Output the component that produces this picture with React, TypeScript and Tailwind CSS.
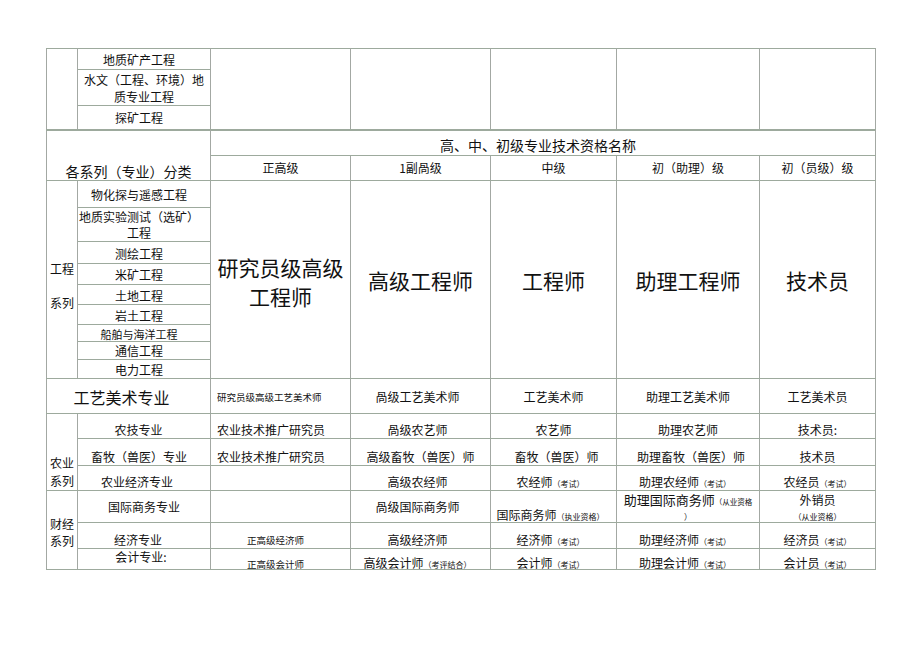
const B = "border border-solid border-y-[#9daa9d] border-x-[#a3a8a3] p-0";
const C = `${B} text-center`;

function Cols() {
  return (
    <colgroup>
      <col className="w-[31px]" />
      <col className="w-[133px]" />
      <col className="w-[140px]" />
      <col className="w-[140px]" />
      <col className="w-[126px]" />
      <col className="w-[143px]" />
      <col className="w-[116px]" />
    </colgroup>
  );
}

const S = ({ children }: { children: React.ReactNode }) => (
  <span className="text-[8px] leading-none">{children}</span>
);

export default function App() {
  const t12 = "text-[12px] leading-[16px]";
  const mid = `${C} align-middle`;
  const eng2 = `${mid} ${t12} pr-[10px] pt-[2px]`;
  const big = `${mid} text-[21px] leading-[29px]`;
  const agri = `${C} align-bottom ${t12}`;
  const fin2 = `${C} align-bottom text-[12px] leading-[14px] pb-[1px]`;
  const fin3 = `${C} align-bottom text-[12px] leading-[12px]`;
  return (
    <div className="min-h-[650px] w-[920px] bg-white pl-[46px] pt-[48px] text-[#111] [font-family:'Noto_Sans_CJK_SC','Noto_Sans',sans-serif]">
      <table className="w-[829px] table-fixed border-collapse">
        <Cols />
        <tbody>
          <tr className="h-[21px]">
            <td rowSpan={3} className={B}></td>
            <td className={`${mid} ${t12} pr-[10px] pt-[2px]`}>地质矿产工程</td>
            <td rowSpan={3} className={B}></td>
            <td rowSpan={3} className={B}></td>
            <td rowSpan={3} className={B}></td>
            <td rowSpan={3} className={B}></td>
            <td rowSpan={3} className={B}></td>
          </tr>
          <tr className="h-[36px]">
            <td className={`${mid} text-[12px] leading-[17px] pt-[1px]`}>
              水文（工程、环境）地
              <br />
              质专业工程
            </td>
          </tr>
          <tr className="h-[24px]">
            <td className={`${mid} ${t12} pr-[10px]`}>探矿工程</td>
          </tr>
        </tbody>
      </table>
      <table className="w-[829px] table-fixed border-collapse">
        <Cols />
        <tbody>
          <tr className="h-[25px]">
            <td rowSpan={2} colSpan={2} className={`${C} align-bottom text-[14px] leading-[18px]`}>
              各系列（专业）分类
            </td>
            <td colSpan={5} className={`${mid} text-[14px] leading-[18px] pt-[3px] pr-[10px]`}>
              高、中、初级专业技术资格名称
            </td>
          </tr>
          <tr className="h-[25px]">
            <td className={`${mid} ${t12}`}>正高级</td>
            <td className={`${mid} ${t12}`}>1副咼级</td>
            <td className={`${mid} ${t12}`}>中级</td>
            <td className={`${mid} ${t12}`}>初（助理）级</td>
            <td className={`${mid} ${t12}`}>初（员级）级</td>
          </tr>

          {/* 工程系列 */}
          <tr className="h-[27px]">
            <td rowSpan={9} className={`${B} align-middle text-left pl-[3px] pt-[11px] text-[12px] leading-[17px]`}>
              工程
              <br />
              <br />
              系列
            </td>
            <td className={eng2}>物化探与遥感工程</td>
            <td rowSpan={9} className={`${big} pt-[5px]`}>
              研究员级高级
              <br />
              工程师
            </td>
            <td rowSpan={9} className={`${big} pt-[2px]`}>高级工程师</td>
            <td rowSpan={9} className={`${big} pt-[2px]`}>工程师</td>
            <td rowSpan={9} className={`${big} pt-[2px]`}>助理工程师</td>
            <td rowSpan={9} className={`${big} pt-[2px]`}>技术员</td>
          </tr>
          <tr className="h-[34px]">
            <td className={`${mid} ${t12} pr-[10px]`}>
              地质实验测试（选矿）
              <br />
              工程
            </td>
          </tr>
          <tr className="h-[22px]">
            <td className={eng2}>测绘工程</td>
          </tr>
          <tr className="h-[21px]">
            <td className={eng2}>米矿工程</td>
          </tr>
          <tr className="h-[20px]">
            <td className={eng2}>土地工程</td>
          </tr>
          <tr className="h-[20px]">
            <td className={eng2}>岩土工程</td>
          </tr>
          <tr className="h-[17px]">
            <td className={`${mid} text-[11px] leading-[14px] pr-[10px] pt-[1px]`}>船舶与海洋工程</td>
          </tr>
          <tr className="h-[18px]">
            <td className={`${mid} ${t12} pr-[10px] pt-[1px]`}>通信工程</td>
          </tr>
          <tr className="h-[19px]">
            <td className={`${mid} ${t12} pr-[10px] pt-[1px]`}>电力工程</td>
          </tr>

          {/* 工艺美术 */}
          <tr className="h-[35px]">
            <td colSpan={2} className={`${mid} text-[16px] leading-[20px] pr-[14px] pt-[1px]`}>
              工艺美术专业
            </td>
            <td className={`${B} align-middle text-left pl-[6px] text-[9.5px] leading-[12px] pt-[2px]`}>
              研究员级高级工艺美术师
            </td>
            <td className={`${mid} ${t12} pr-[6px] pt-[1px]`}>咼级工艺美术师</td>
            <td className={`${mid} ${t12} pt-[1px]`}>工艺美术师</td>
            <td className={`${mid} ${t12} pt-[1px]`}>助理工艺美术师</td>
            <td className={`${mid} ${t12} pt-[1px]`}>工艺美术员</td>
          </tr>

          {/* 农业系列 */}
          <tr className="h-[25px]">
            <td rowSpan={3} className={`${B} align-bottom text-left pl-[3px] text-[12px] leading-[18px]`}>
              农业
              <br />
              系列
            </td>
            <td className={`${agri} pr-[11px]`}>农技专业</td>
            <td className={`${B} align-bottom text-left pl-[6px] ${t12}`}>农业技术推广研究员</td>
            <td className={`${agri} pr-[6px]`}>咼级农艺师</td>
            <td className={agri}>农艺师</td>
            <td className={agri}>助理农艺师</td>
            <td className={agri}>技术员:</td>
          </tr>
          <tr className="h-[27px]">
            <td className={`${agri} pr-[10px]`}>畜牧（兽医）专业</td>
            <td className={`${B} align-bottom text-left pl-[6px] ${t12}`}>农业技术推广研究员</td>
            <td className={agri}>高级畜牧（兽医）师</td>
            <td className={`${agri} pl-[6px]`}>畜牧（兽医）师</td>
            <td className={`${agri} pl-[6px]`}>助理畜牧（兽医）师</td>
            <td className={agri}>技术员</td>
          </tr>
          <tr className="h-[25px]">
            <td className={`${agri} pr-[14px]`}>农业经济专业</td>
            <td className={B}></td>
            <td className={`${agri} pr-[6px]`}>高级农经师</td>
            <td className={`${agri} pr-[6px]`}>
              农经师<S>（考试）</S>
            </td>
            <td className={`${agri} pr-[6px]`}>
              助理农经师<S>（考试）</S>
            </td>
            <td className={agri}>
              农经员<S>（考试）</S>
            </td>
          </tr>

          {/* 财经系列 */}
          <tr className="h-[32px]">
            <td rowSpan={3} className={`${B} align-middle text-left pl-[3px] pt-[4px] text-[12px] leading-[17px]`}>
              财经
              <br />
              系列
            </td>
            <td className={`${mid} ${t12}`}>国际商务专业</td>
            <td className={B}></td>
            <td className={`${mid} ${t12} pr-[6px]`}>咼级国际商务师</td>
            <td className={`${C} align-bottom text-[12px] leading-[14px] whitespace-nowrap pr-[6px]`}>
              国际商务师<S>（执业资格）</S>
            </td>
            <td className={`${mid} text-[13px] leading-[15px]`}>
              助理国际商务师<span className="text-[7.5px] leading-none">（从业资格</span>
              <br />
              <span className="text-[8px] leading-none">）</span>
            </td>
            <td className={`${mid} text-[12px] leading-[15px]`}>
              外销员
              <br />
              <S>（从业资格）</S>
            </td>
          </tr>
          <tr className="h-[26px]">
            <td className={`${fin2} pr-[12px]`}>经济专业</td>
            <td className={`${B} align-bottom text-left pl-[36px] text-[9.5px] leading-[12px] pb-[2px]`}>
              正高级经济师
            </td>
            <td className={`${fin2} pr-[6px]`}>高级经济师</td>
            <td className={`${fin2} pr-[6px]`}>
              经济师<S>（考试）</S>
            </td>
            <td className={`${fin2} pr-[6px]`}>
              助理经济师<S>（考试）</S>
            </td>
            <td className={fin2}>
              经济员<S>（考试）</S>
            </td>
          </tr>
          <tr className="h-[21px]">
            <td className={`${C} align-top text-[12px] leading-[16px] pr-[6px]`}>会计专业:</td>
            <td className={`${B} align-bottom text-left pl-[36px] text-[9.5px] leading-[10px]`}>
              正高级会计师
            </td>
            <td className={`${fin3} pr-[6px] whitespace-nowrap`}>
              高级会计师<S>（考评结合）</S>
            </td>
            <td className={`${fin3} pr-[6px]`}>
              会计师<S>（考试）</S>
            </td>
            <td className={`${fin3} pr-[6px]`}>
              助理会计师<S>（考试）</S>
            </td>
            <td className={fin3}>
              会计员<S>（考试）</S>
            </td>
          </tr>
        </tbody>
      </table>
    </div>
  );
}
